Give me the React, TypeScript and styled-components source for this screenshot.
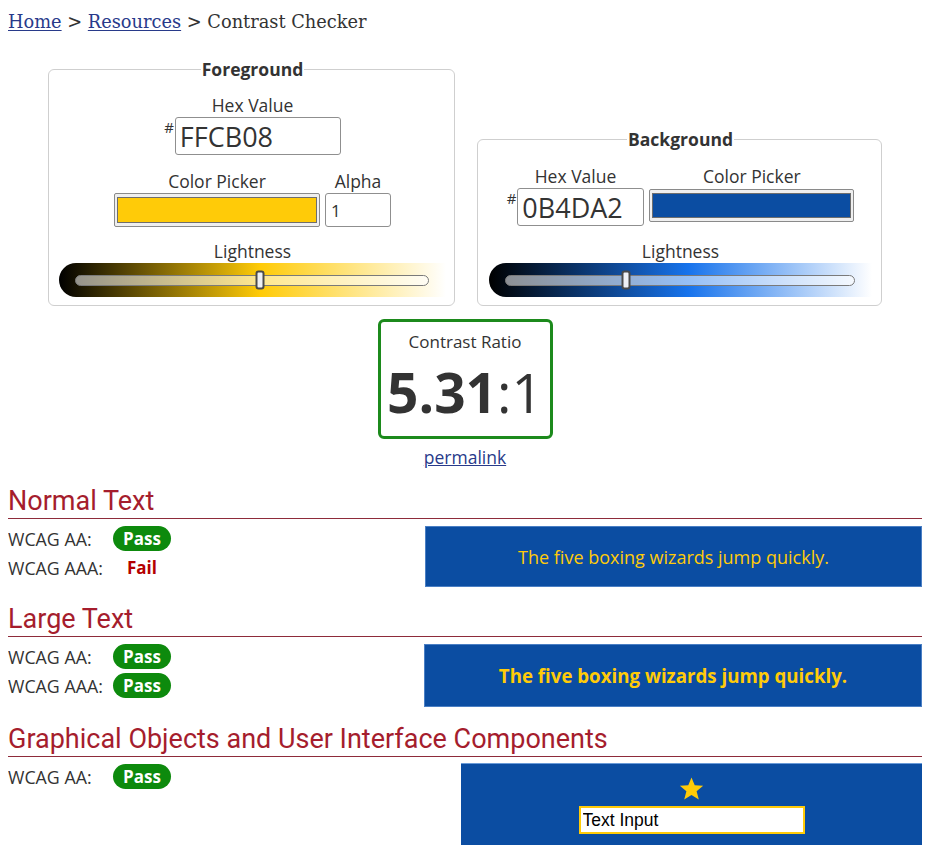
import React from "react";
import styled, { createGlobalStyle } from "styled-components";

const Global = createGlobalStyle`
  html, body { background: #fff; }
  body { margin: 8px; font-family: "Open Sans", "DejaVu Sans", sans-serif; color: #333; }
  * { box-sizing: border-box; }
`;

const Page = styled.div`
  width: 914px;
`;

const Crumbs = styled.nav`
  font-family: "DejaVu Serif", "Liberation Serif", serif;
  font-size: 17.8px;
  line-height: 27px;
  color: #333;
`;

const Link = styled.a`
  color: #283a8a;
  text-decoration: underline;
  text-underline-offset: 2px;
`;

const PanelRow = styled.div`
  display: flex;
  justify-content: center;
  align-items: flex-end;
  gap: 22px;
  margin-top: 22px;
`;

const Panel = styled.fieldset`
  width: 405px;
  margin: 0;
  border: 1px solid #cfcfcf;
  border-radius: 6px;
  padding: 0 8px 8px 10px;
  display: flex;
  flex-direction: column;
  align-items: center;
`;

const Legend = styled.legend`
  margin: 0 auto;
  padding: 0 1px;
  font-weight: 700;
  font-size: 17.5px;
  line-height: 24px;
  color: #333;
`;

const Label = styled.div<{ $top?: number }>`
  font-size: 17.5px;
  line-height: 24px;
  text-align: center;
  color: #333;
  margin-top: ${(p) => p.$top ?? 0}px;
`;

const Group = styled.div<{ $top?: number }>`
  display: flex;
  align-items: flex-start;
  gap: 5px;
  margin-top: ${(p) => p.$top ?? 0}px;
`;

const Col = styled.div`
  display: flex;
  flex-direction: column;
  align-items: center;
`;

const HexWrap = styled.div`
  display: flex;
  align-items: flex-start;
`;

const Hash = styled.span`
  font-size: 15px;
  line-height: 15px;
  margin-top: 3px;
  margin-right: 1px;
  color: #333;
`;

const HexInput = styled.input<{ $w: number }>`
  width: ${(p) => p.$w}px;
  height: 38px;
  border: 1px solid #8f8f8f;
  border-radius: 3px;
  padding: 0 4px;
  font-family: "Open Sans", sans-serif;
  font-size: 27px;
  color: #333;
  background: #fff;
`;

const AlphaInput = styled.input`
  width: 66px;
  height: 34px;
  border: 1px solid #8f8f8f;
  border-radius: 3px;
  padding: 0 5px;
  font-family: "Open Sans", sans-serif;
  font-size: 17px;
  color: #333;
  background: #fff;
`;

const Picker = styled.div<{ $w: number; $h: number; $mt?: number }>`
  width: ${(p) => p.$w}px;
  height: ${(p) => p.$h}px;
  margin-top: ${(p) => p.$mt ?? 0}px;
  border: 1px solid #8a8a8a;
  border-radius: 2px;
  background: #efefef;
  padding: 3px 2px;
  display: flex;
`;

const Swatch = styled.div<{ $c: string }>`
  flex: 1;
  background: ${(p) => p.$c};
  border: 1px solid #6e6e6e;
`;

const Slider = styled.div<{ $w: number; $mid: string }>`
  width: ${(p) => p.$w}px;
  height: 34px;
  border-radius: 17px 0 0 17px;
  background: linear-gradient(to right, #000 0%, ${(p) => p.$mid} 52%, #fff 100%);
  padding: 0 17px 0 16px;
  display: flex;
  align-items: center;
`;

const Track = styled.div`
  position: relative;
  flex: 1;
  height: 11px;
  border: 1px solid #7a7a7a;
  border-radius: 6px;
  background: rgba(255, 255, 255, 0.55);
`;

const Thumb = styled.div`
  position: absolute;
  top: 50%;
  width: 9px;
  height: 19px;
  transform: translate(-50%, -50%);
  background: #eef0f6;
  border: 2px solid #4a4a4a;
  border-radius: 3px;
`;

const RatioBox = styled.div`
  width: 175px;
  height: 120px;
  margin: 13px auto 0;
  border: 3px solid #1c8a1c;
  border-radius: 6px;
  display: flex;
  flex-direction: column;
  align-items: center;
  padding-top: 8px;
`;

const RatioLabel = styled.div`
  font-size: 17px;
  line-height: 24px;
  color: #333;
`;

const Ratio = styled.div`
  font-size: 55px;
  line-height: 60px;
  color: #333;
  margin-top: 8px;
`;

const RatioStrong = styled.strong`
  font-weight: 700;
`;

const Permalink = styled.a`
  display: block;
  width: max-content;
  margin: 6px auto 0;
  font-size: 17.5px;
  line-height: 24px;
  color: #283a8a;
  text-decoration: underline;
`;

const Heading = styled.h2`
  margin: 16px 0 0;
  font-family: Roboto, "Open Sans", sans-serif;
  font-weight: 400;
  font-size: 27px;
  line-height: 32px;
  color: #a51d2d;
  border-bottom: 1px solid #8e2b3a;
  padding-bottom: 1px;
`;

const Section = styled.div`
  display: flex;
  justify-content: space-between;
  align-items: flex-start;
  margin-top: 5px;
`;

const Results = styled.div`
  display: grid;
  grid-template-columns: 105px auto;
  grid-auto-rows: 29px;
  align-items: center;
`;

const Crit = styled.span`
  font-size: 17.8px;
  color: #333;
`;

const Badge = styled.span<{ $pass: boolean }>`
  display: inline-flex;
  align-items: center;
  justify-content: center;
  min-width: 58px;
  height: 25px;
  border-radius: 13px;
  font-weight: 700;
  font-size: 17px;
  color: ${(p) => (p.$pass ? "#fff" : "#b40000")};
  background: ${(p) => (p.$pass ? "#0d8a0d" : "transparent")};
  justify-self: start;
`;

const Sample = styled.div<{ $w: number; $h: number; $bold?: boolean }>`
  width: ${(p) => p.$w}px;
  height: ${(p) => p.$h}px;
  margin-top: 2px;
  background: #0b4da2;
  border: 1px solid #4a7fc4;
  color: #ffcb08;
  display: flex;
  align-items: center;
  justify-content: center;
  font-size: ${(p) => (p.$bold ? 18.7 : 18)}px;
  font-weight: ${(p) => (p.$bold ? 700 : 400)};
`;

const GraphicBox = styled.div`
  width: 461px;
  height: 82px;
  margin-top: 1px;
  background: #0b4da2;
  border-top: 1px solid #6a9bd8;
  display: flex;
  flex-direction: column;
  align-items: center;
  padding-top: 13px;
  gap: 5px;
`;

const DemoInput = styled.input`
  width: 226px;
  height: 28px;
  border: 2px solid #ffcb08;
  padding: 0 2px;
  font-family: "Liberation Sans", Arial, sans-serif;
  font-size: 17.5px;
  color: #000;
  background: #fff;
`;

const Star = () => (
  <svg width="25" height="24" viewBox="0 0 24 23" aria-hidden="true">
    <polygon
      points="12,0.5 15.1,8 23.2,8.4 16.9,13.6 19,21.6 12,17.2 5,21.6 7.1,13.6 0.8,8.4 8.9,8"
      fill="#ffcb08"
    />
  </svg>
);

type Row = { label: string; pass: boolean };

const ResultList = ({ rows }: { rows: Row[] }) => (
  <Results>
    {rows.map((r) => (
      <React.Fragment key={r.label}>
        <Crit>{r.label}</Crit>
        <Badge $pass={r.pass}>{r.pass ? "Pass" : "Fail"}</Badge>
      </React.Fragment>
    ))}
  </Results>
);

export default function App() {
  return (
    <Page>
      <Global />
      <Crumbs>
        <Link href="#">Home</Link> &gt; <Link href="#">Resources</Link> &gt; Contrast Checker
      </Crumbs>

      <PanelRow>
        <Panel>
          <Legend>Foreground</Legend>
          <Label $top={12}>Hex Value</Label>
          <HexWrap>
            <Hash>#</Hash>
            <HexInput $w={166} defaultValue="FFCB08" />
          </HexWrap>
          <Group $top={14}>
            <Col>
              <Label>Color Picker</Label>
              <Picker $w={206} $h={34}>
                <Swatch $c="#ffcb08" />
              </Picker>
            </Col>
            <Col>
              <Label>Alpha</Label>
              <AlphaInput defaultValue="1" />
            </Col>
          </Group>
          <Label $top={12}>Lightness</Label>
          <Slider $w={387} $mid="#ffcb08">
            <Track>
              <Thumb style={{ left: "52.3%" }} />
            </Track>
          </Slider>
        </Panel>

        <Panel>
          <Legend>Background</Legend>
          <Group $top={13}>
            <Col>
              <Label>Hex Value</Label>
              <HexWrap>
                <Hash>#</Hash>
                <HexInput $w={127} defaultValue="0B4DA2" />
              </HexWrap>
            </Col>
            <Col>
              <Label>Color Picker</Label>
              <Picker $w={205} $h={33} $mt={1}>
                <Swatch $c="#0b4da2" />
              </Picker>
            </Col>
          </Group>
          <Label $top={13}>Lightness</Label>
          <Slider $w={383} $mid="#1773ec">
            <Track>
              <Thumb style={{ left: "34.5%" }} />
            </Track>
          </Slider>
        </Panel>
      </PanelRow>

      <RatioBox>
        <RatioLabel>Contrast Ratio</RatioLabel>
        <Ratio>
          <RatioStrong>5.31</RatioStrong>:1
        </Ratio>
      </RatioBox>
      <Permalink href="#">permalink</Permalink>

      <Heading>Normal Text</Heading>
      <Section>
        <ResultList rows={[{ label: "WCAG AA:", pass: true }, { label: "WCAG AAA:", pass: false }]} />
        <Sample $w={497} $h={61}>The five boxing wizards jump quickly.</Sample>
      </Section>

      <Heading>Large Text</Heading>
      <Section>
        <ResultList rows={[{ label: "WCAG AA:", pass: true }, { label: "WCAG AAA:", pass: true }]} />
        <Sample $w={498} $h={63} $bold>The five boxing wizards jump quickly.</Sample>
      </Section>

      <Heading>Graphical Objects and User Interface Components</Heading>
      <Section>
        <ResultList rows={[{ label: "WCAG AA:", pass: true }]} />
        <GraphicBox>
          <Star />
          <DemoInput defaultValue="Text Input" />
        </GraphicBox>
      </Section>
    </Page>
  );
}
